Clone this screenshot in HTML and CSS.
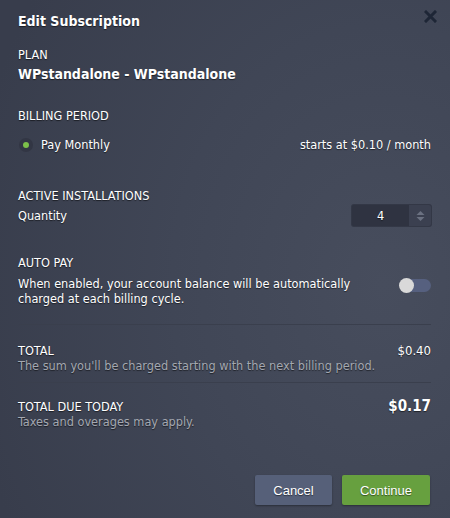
FILE: index.html
```html
<!DOCTYPE html>
<html>
<head>
<meta charset="utf-8">
<link rel="stylesheet" href="styles.css">
</head>
<body>
<div class="dialog">
  <div class="header">
    <h1 class="title">Edit Subscription</h1>
    <svg class="close" width="13" height="13" viewBox="0 0 13 13"><path d="M2 2 L11 11 M11 2 L2 11" stroke="#1e2636" stroke-width="3" stroke-linecap="square"/></svg>
  </div>

  <section class="sec plan">
    <div class="label">PLAN</div>
    <div class="plan-name">WPstandalone - WPstandalone</div>
  </section>

  <section class="sec billing">
    <div class="label">BILLING PERIOD</div>
    <div class="row radio-row">
      <div class="radio-wrap"><span class="radio"><span class="dot"></span></span><span class="text">Pay Monthly</span></div>
      <span class="text">starts at $0.10 / month</span>
    </div>
  </section>

  <section class="sec installs">
    <div class="label">ACTIVE INSTALLATIONS</div>
    <div class="row">
      <span class="text">Quantity</span>
      <div class="spinner">
        <span class="num">4</span>
        <span class="arrows">
          <svg width="9" height="12" viewBox="0 0 9 12"><path d="M0.5 5 L4.5 1 L8.5 5 Z" fill="#6b7181"/><path d="M0.5 7 L4.5 11 L8.5 7 Z" fill="#6b7181"/></svg>
        </span>
      </div>
    </div>
  </section>

  <section class="sec autopay">
    <div class="label">AUTO PAY</div>
    <div class="row top">
      <p class="text desc">When enabled, your account balance will be automatically charged at each billing cycle.</p>
      <span class="toggle"><span class="knob"></span></span>
    </div>
  </section>

  <hr class="divider">

  <section class="sum">
    <div class="row top">
      <div>
        <div class="label">TOTAL</div>
        <div class="sub">The sum you'll be charged starting with the next billing period.</div>
      </div>
      <span class="amount">$0.40</span>
    </div>
  </section>

  <hr class="divider second">

  <section class="sum due">
    <div class="row top">
      <div>
        <div class="label">TOTAL DUE TODAY</div>
        <div class="sub">Taxes and overages may apply.</div>
      </div>
      <span class="amount big">$0.17</span>
    </div>
  </section>

  <div class="footer">
    <button class="btn cancel">Cancel</button>
    <button class="btn continue">Continue</button>
  </div>
</div>
</body>
</html>
```

FILE: styles.css
```css
* { box-sizing: border-box; }
html, body { margin: 0; padding: 0; }
body {
  width: 450px;
  height: 518px;
  overflow: hidden;
  font-family: "DejaVu Sans Condensed", "DejaVu Sans", Verdana, sans-serif;
  font-size: 12.6px;
  color: #ffffff;
}
.dialog {
  width: 450px;
  height: 518px;
  padding: 0 19px 0 18px;
  background: radial-gradient(ellipse 420px 520px at 85% 55%, #474d5d 0%, #404656 50%, #383d4c 100%);
  display: flex;
  flex-direction: column;
  text-shadow: 0 1px 1px rgba(0,0,0,0.55);
}
.header {
  display: flex;
  justify-content: space-between;
  align-items: flex-start;
  height: 47px;
  padding-top: 13px;
}
.title {
  margin: 0;
  font-size: 14px;
  font-weight: bold;
  line-height: 16px;
}
.close {
  margin-top: -3px;
  margin-right: -6px;
}
.label {
  font-size: 12.6px;
  line-height: 15px;
}
.text { font-size: 12.6px; line-height: 15px; }
.plan-name {
  margin-top: 4px;
  font-size: 14px;
  font-weight: bold;
  line-height: 17px;
}
.billing { margin-top: 25px; }
.row {
  display: flex;
  justify-content: space-between;
  align-items: center;
}
.row.top { align-items: flex-start; }
.radio-row { margin-top: 14px; }
.radio-wrap { display: flex; align-items: center; gap: 8px; }
.radio {
  width: 14px; height: 14px;
  border-radius: 50%;
  background: #323644;
  display: flex; align-items: center; justify-content: center;
  margin-left: 1px;
}
.dot { width: 6px; height: 6px; border-radius: 50%; background: #7cc04a; }
.installs { margin-top: 36px; }
.installs .row { margin-top: 2px; }
.spinner {
  display: flex;
  width: 79px;
  height: 21px;
  border-radius: 2px;
  background: #2f3341;
  overflow: hidden;
  box-shadow: 0 0 0 1px rgba(40,44,56,0.6);
}
.num {
  flex: 1;
  text-align: center;
  line-height: 21px;
  font-size: 12.6px;
}
.arrows {
  width: 22px;
  background: #3b4050;
  display: flex; align-items: center; justify-content: center;
}
.autopay { margin-top: 29px; }
.autopay .row { margin-top: 6px; }
.desc { margin: 0; width: 350px; }
.toggle {
  margin-top: 3px;
  width: 31px; height: 13px;
  border-radius: 7px;
  background: #56607f;
  position: relative;
}
.knob {
  position: absolute;
  left: -1px; top: -1px;
  width: 15px; height: 15px;
  border-radius: 50%;
  background: #d9d9d9;
}
.divider {
  margin: 18px 0 0 0;
  border: 0;
  height: 1px;
  background: #3a3f4d;
}
.divider.second { margin-top: 9px; }
.sum { padding-top: 18px; }
.due { padding-top: 16px; }
.sub { color: #a4a8b1; font-size: 12.6px; line-height: 15px; }
.amount { font-size: 13px; line-height: 15px; }
.amount.big { font-size: 15px; font-weight: bold; line-height: 15px; }
.footer {
  margin-top: auto;
  margin-bottom: 13px;
  display: flex;
  justify-content: flex-end;
  gap: 10px;
  padding-right: 1px;
}
.btn {
  height: 30px;
  border: 0;
  border-radius: 2px;
  font-family: "Liberation Sans", Arial, sans-serif;
  font-size: 13px;
  color: #fff;
  text-shadow: 0 1px 1px rgba(0,0,0,0.5);
  box-shadow: 0 1px 2px rgba(0,0,0,0.35);
}
.cancel { width: 77px; background: #566079; }
.continue { width: 88px; background: #67a03f; }
```
